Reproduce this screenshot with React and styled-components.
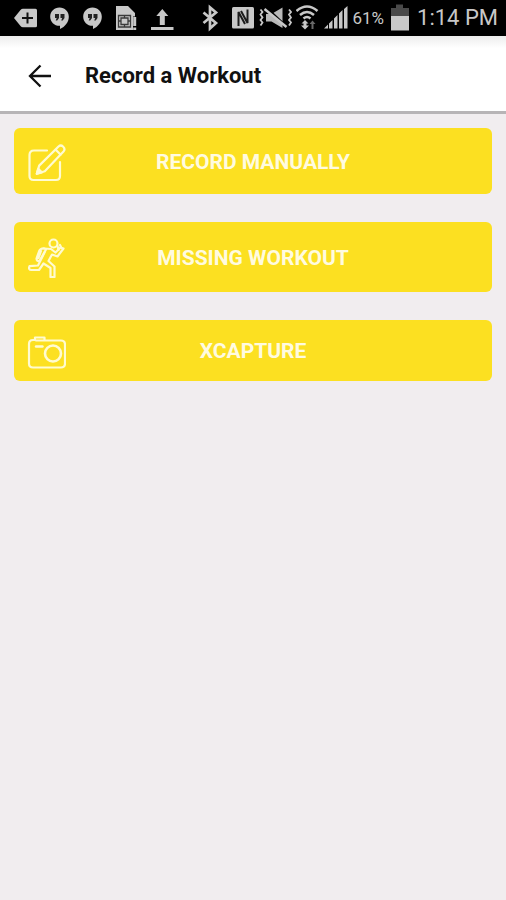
import React from 'react';
import styled, { createGlobalStyle } from 'styled-components';

export default function App() {
    return (
        <>
            <GlobalStyle />
            <Screen>
                <StatusBar />
                <Header>
                    <BackButton type="button" aria-label="Back">
                        <svg width="24" height="24" viewBox="0 0 24 24" fill="none" stroke="#111" strokeWidth="2.300">
                            <path d="M23 12H2.500M12.500 1.500L2 12l10.500 10.500" />
                        </svg>
                    </BackButton>
                    <h1>Record a Workout</h1>
                </Header>
                <Menu>
                    {actions.map(({ label, height, Icon }) => (
                        <ActionButton key={label} type="button" $height={height}>
                            <Icon />
                            <span>{label}</span>
                        </ActionButton>
                    ))}
                </Menu>
            </Screen>
        </>
    );
}

function StatusBar() {
    return (
        <Bar>
            <Notifications>
                {/* tag with a plus */}
                <StatusIcon width="23" height="36" viewBox="14 0 23 36">
                    <path fill="#c8c8c8" d="M14 18l6.500-8q1-1.200 2.500-1.200h12.500q1.500 0 1.500 1.500v15.400q0 1.500-1.500 1.500H23q-1.500 0-2.500-1.200z" />
                    <path stroke="#111" strokeWidth="2" d="M22 18h11M27.500 12.500v11" />
                </StatusIcon>
                <HangoutsIcon />
                <HangoutsIcon />
                {/* sim card warning */}
                <StatusIcon width="22" height="36" viewBox="117 0 22 36">
                    <path fill="#c8c8c8" d="M117 6h12l7 7v3.500h-2V30h-17z" />
                    <path stroke="#3a3a3a" fill="none" strokeWidth="1.300" d="M119.500 15.500h12v11.500h-12zM122 18h7v6.500h-7zM125.500 15.500v3M125.500 24v3M119.500 21h3M129 21h3" />
                    <path stroke="#c8c8c8" strokeWidth="3" d="M135.700 17v9M135.700 27.500v2.500" />
                </StatusIcon>
                {/* upload finished */}
                <StatusIcon width="23" height="36" viewBox="150 0 23 36">
                    <path fill="#c8c8c8" d="M161.300 9l6 7h-3.500v9h-5v-9h-3.500zM150 27h22.500v3H150z" />
                </StatusIcon>
            </Notifications>
            <System>
                {/* bluetooth */}
                <StatusIcon width="26" height="36" viewBox="200 0 26 36">
                    <path fill="none" stroke="#c8c8c8" strokeWidth="2.700" d="M201.500 12.500l12.500 10.500-6 5.500V7.500l6 5-12.500 10.500" />
                </StatusIcon>
                {/* nfc */}
                <StatusIcon width="22" height="36" viewBox="231 0 22 36">
                    <rect x="231" y="7" width="22" height="21.500" rx="1.500" fill="#c8c8c8" />
                    <path fill="none" stroke="#1c1c1c" strokeWidth="2" d="M237.500 26V12l6.500 12M246.500 9.500V23L240 11" />
                </StatusIcon>
                {/* vibrate with sound off */}
                <StatusIcon width="34" height="36" viewBox="258 0 34 36">
                    <path fill="#b8b8b8" d="M266 14h5.500l11-6.500v20.500l-11-6.500H266z" />
                    <path fill="none" stroke="#000" strokeWidth="2" d="M267 8l18 17" />
                    <path fill="none" stroke="#c8c8c8" strokeWidth="2.400" d="M264.500 9l22 18" />
                    <path fill="none" stroke="#c8c8c8" strokeWidth="1.800" d="M260.500 9.500l2 2.500-2 2.500 2 3-2 2.500 2 2.500-2 3M289 9.500l2 2.500-2 2.500 2 3-2 2.500 2 2.500-2 3" />
                </StatusIcon>
                {/* wifi with traffic arrows */}
                <StatusIcon width="24" height="36" viewBox="297 0 24 36">
                    <path fill="none" stroke="#c8c8c8" strokeWidth="2.500" d="M297.500 11q10.500-9 21 0M301 15q7-6 14 0M304.500 18.500q3.500-3 7 0" />
                    <path fill="#c8c8c8" d="M306 20l3.500 3.500h-2v2h2.500l-4 4-4-4h2.500v-2h-2z" />
                    <path fill="#696969" d="M313.500 20.500l3 3.500h-2v5h-2v-5h-2z" />
                </StatusIcon>
                {/* signal strength */}
                <StatusIcon width="24" height="36" viewBox="325 0 24 36">
                    <path fill="#c8c8c8" d="M325 28.500l4-4v4zM330 23.500l3.500-3.500v8.500H330zM335 18.500l3.500-3.500v13.500H335zM340 13.500l3.500-3.500v18.500H340zM345 9l3.500-3v22.500H345z" />
                </StatusIcon>
                <Battery>61%</Battery>
                <StatusIcon width="18" height="36" viewBox="389 0 18 36">
                    <path fill="#494949" d="M394 4.500h7V8h6v9h-18V8h5z" />
                    <path fill="#c8c8c8" d="M389 16h18v14.500h-18z" />
                </StatusIcon>
                <Clock>1:14 PM</Clock>
            </System>
        </Bar>
    );
}

function HangoutsIcon() {
    return (
        <StatusIcon width="20" height="36" viewBox="50 0 20 36">
            <path fill="#c8c8c8" d="M59.500 7.500c5.300 0 9.300 4 9.300 9.200 0 5.500-3.800 10-8.800 12.300v-3.200c-5.700.2-9.800-3.900-9.800-9.100 0-5.200 4-9.200 9.300-9.200z" />
            <path fill="#222" d="M55 14h4v4l-1.800 2.500h-1.500l1-2.500H55zM60.500 14h4v4l-1.800 2.500h-1.500l1-2.500h-1.700z" />
        </StatusIcon>
    );
}

function EditIcon() {
    return (
        <ActionIcon viewBox="0 0 40 40">
            <path d="M21 8.500H8Q3.500 8.500 3.500 13v21q0 4 4 4H30q4 0 4-4V20" />
            <path d="M10.800 31.800l2.400-8.200L32.500 4.500q2.300-2 4.500 0 2.700 2.400.5 5L18.800 29.200zM29.500 7.500l5.200 5.200" />
            <path d="M10.800 31.800l1.400-5 3.600 3.600z" fill="#fffbd0" />
        </ActionIcon>
    );
}

function RunnerIcon() {
    return (
        <ActionIcon viewBox="0 0 40 40">
            <circle cx="27.500" cy="5.500" r="4" />
            <path d="M18 10.500l7 .5 4.500 3.500 5-5 3 1-6 8-5.500-2-3.500 6.500 6 5.500v10.500h-4V30l-7-4.500-4.500 6.500H5.500q-3.500-.3-2-3.800l8.500-.7 3.500-7 3-6" />
            <path d="M18.500 10.500q-4-.5-5.500 3l-2.500 7q0 3 3 2.500l6.500-11.500M15 13l-2.500 7M31.500 8l1 4M34 7l1.500 3" />
        </ActionIcon>
    );
}

function CameraIcon() {
    return (
        <ActionIcon viewBox="0 0 40 40">
            <path d="M7 9q-4 0-4 4v19.500q0 4 4 4h28q4 0 4-4V13.500q0-4-4-4H18.500V6.500H9V9zM10 9.500h8" />
            <circle cx="27" cy="22.500" r="8" strokeWidth="2.600" />
            <path strokeWidth="2.400" d="M10 15.500h6.500" />
        </ActionIcon>
    );
}

const actions = [
    { label: 'RECORD MANUALLY', height: 66, Icon: EditIcon },
    { label: 'MISSING WORKOUT', height: 70, Icon: RunnerIcon },
    { label: 'XCAPTURE', height: 61, Icon: CameraIcon },
];

const GlobalStyle = createGlobalStyle`
    * {
        box-sizing: border-box;
    }

    body {
        margin: 0;
        background-color: #f1edef;
        font-family: Roboto, 'Liberation Sans', sans-serif;
    }
`;

const Screen = styled.div`
    min-height: 100vh;
    background-color: #f1edef;
`;

const Bar = styled.div`
    display: flex;
    justify-content: space-between;
    height: 36px;
    padding: 0 8px 0 14px;
    background-color: #000;
    color: #c8c8c8;
`;

const Notifications = styled.div`
    display: flex;
    gap: 13px;
`;

const System = styled.div`
    display: flex;
    align-items: center;
    gap: 4px;
`;

const StatusIcon = styled.svg`
    display: block;
    flex: none;
`;

const Battery = styled.span`
    margin-right: 3px;
    font-size: 17px;
    line-height: 36px;
`;

const Clock = styled.span`
    margin-left: 4px;
    font-size: 22px;
    line-height: 36px;
    white-space: nowrap;
`;

const Header = styled.header`
    display: flex;
    align-items: center;
    gap: 33px;
    height: 78px;
    padding: 4px 28px 0;
    border-bottom: 3px solid #b7b4b6;
    background: linear-gradient(#ededed, #fff 12px);

    h1 {
        margin: 0;
        color: #111;
        font-size: 22px;
        font-weight: 700;
        line-height: 28px;
    }
`;

const BackButton = styled.button`
    display: flex;
    padding: 0;
    border: 0;
    background: none;
    cursor: pointer;
`;

const Menu = styled.main`
    display: flex;
    flex-direction: column;
    gap: 28px;
    padding: 14px;
`;

const ActionButton = styled.button`
    display: grid;
    grid-template-columns: 40px 1fr 40px;
    align-items: center;
    width: 100%;
    height: ${({ $height }) => $height}px;
    padding: 1px 12px 0;
    border: 0;
    border-radius: 6px;
    background-color: #fce021;
    color: #fffbe0;
    font-family: inherit;
    font-size: 21px;
    font-weight: 700;
    line-height: 24px;
    text-align: center;
    cursor: pointer;
`;

const ActionIcon = styled.svg`
    width: 40px;
    height: 40px;
    fill: none;
    stroke: #fffbd0;
    stroke-width: 2.2;
    stroke-linecap: round;
    stroke-linejoin: round;
`;
